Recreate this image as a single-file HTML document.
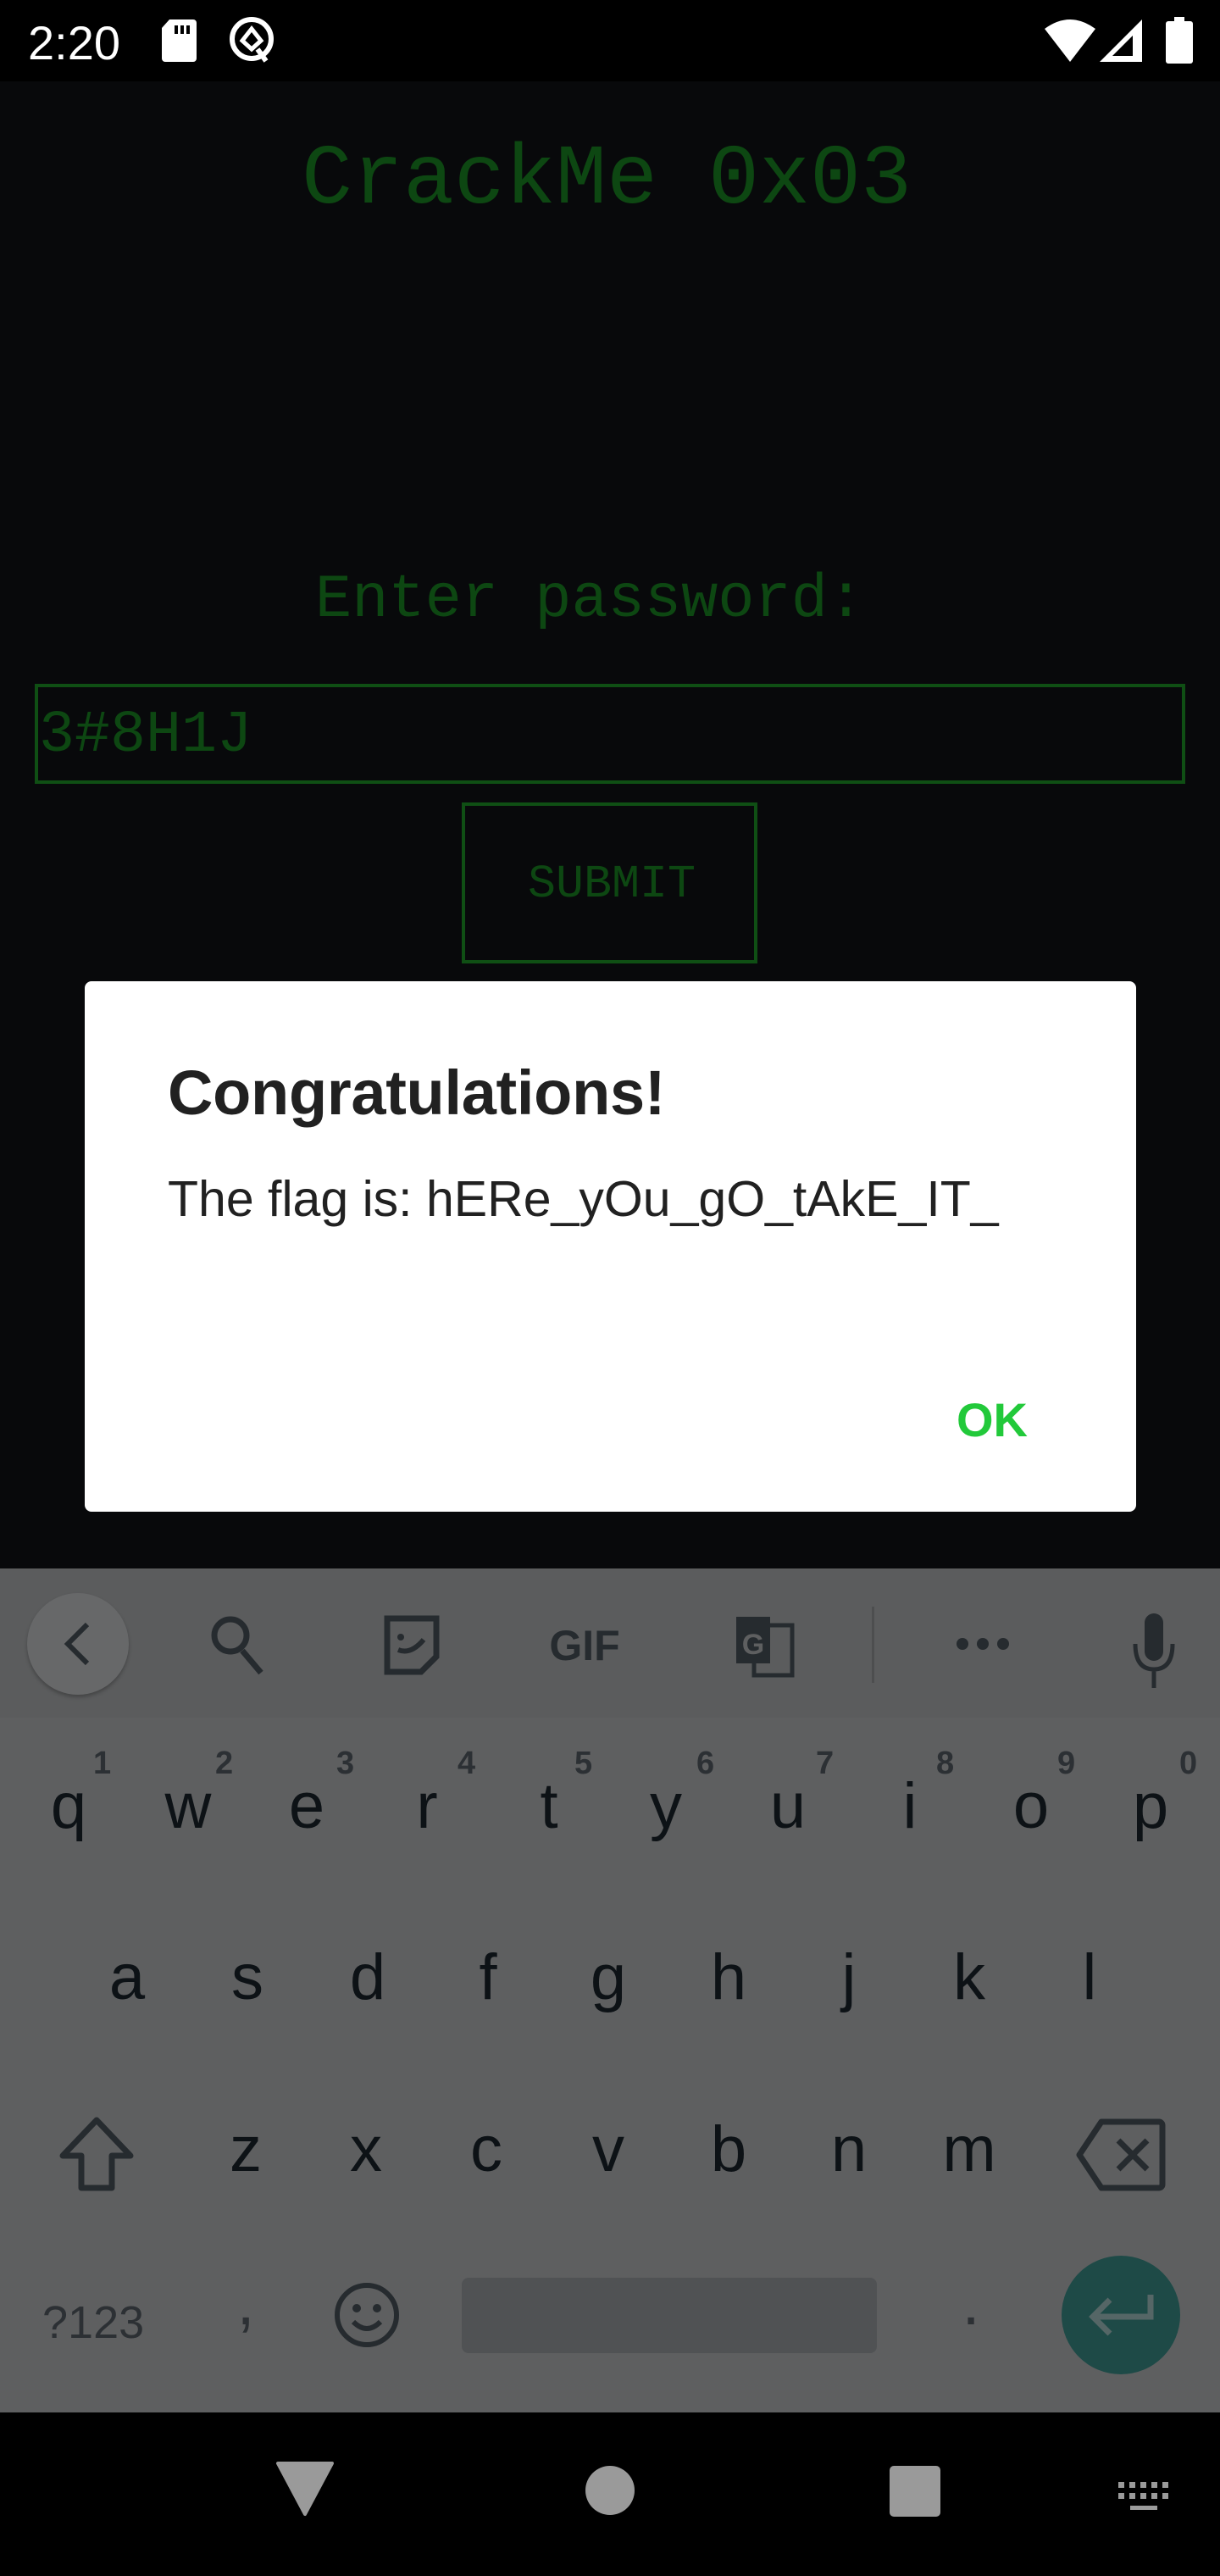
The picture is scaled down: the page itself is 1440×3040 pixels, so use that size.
<!DOCTYPE html>
<html><head><meta charset="utf-8"><style>
*{margin:0;padding:0;box-sizing:border-box}
body{width:1440px;height:3040px;background:#08090b;position:relative;overflow:hidden;font-family:"Liberation Sans",sans-serif}
.a{position:absolute;line-height:1;white-space:nowrap}
.m{font-family:"Liberation Mono",monospace;color:#0d4712}
.k{position:absolute;width:144px;text-align:center;line-height:1;font-size:76px;color:#0d1216}
.n{position:absolute;line-height:1;font-size:38px;color:#2c3034;font-weight:bold}
</style></head><body>
<!-- status bar -->
<div style="position:absolute;left:0;top:0;width:1440px;height:96px;background:#000"></div>
<div class="a" style="left:33px;top:23px;font-size:56px;color:#fff">2:20</div>
<svg style="position:absolute;left:186px;top:20px" width="50" height="56" viewBox="0 0 50 56"><path d="M14 3h28a4 4 0 0 1 4 4v42a4 4 0 0 1-4 4H9a4 4 0 0 1-4-4V13z" fill="#fff"/><rect x="20" y="10" width="4" height="10" fill="#000"/><rect x="27" y="10" width="4" height="10" fill="#000"/><rect x="34" y="10" width="4" height="10" fill="#000"/></svg>
<svg style="position:absolute;left:268px;top:18px" width="60" height="58" viewBox="0 0 60 58"><circle cx="29" cy="28" r="23" fill="none" stroke="#fff" stroke-width="6"/><path d="M29 16l11 14-11 10-11-10z" fill="none" stroke="#fff" stroke-width="5"/><path d="M36 40l10 14" stroke="#fff" stroke-width="6"/></svg>
<svg style="position:absolute;left:1232px;top:22px" width="62" height="52" viewBox="0 0 62 52"><path d="M1 12Q31-10 61 12L31 51z" fill="#fff"/></svg>
<svg style="position:absolute;left:1297px;top:22px" width="52" height="52" viewBox="0 0 52 52"><path d="M51 1V51H1z" fill="#fff"/><path d="M40 20V44H16z" fill="#000"/></svg>
<svg style="position:absolute;left:1376px;top:20px" width="32" height="55" viewBox="0 0 32 55"><rect x="10" y="0" width="12" height="6" fill="#fff"/><rect x="0" y="5" width="32" height="50" rx="3" fill="#fff"/></svg>

<!-- app -->
<div class="a m" style="left:0;width:1432px;text-align:center;top:164px;font-size:100px">CrackMe 0x03</div>
<div class="a m" style="left:372px;top:672px;font-size:72px">Enter password:</div>
<div style="position:absolute;left:41px;top:807px;width:1358px;height:118px;border:4px solid #0f4f14"></div>
<div class="a m" style="left:46px;top:834px;font-size:70px">3#8H1J</div>
<div style="position:absolute;left:545px;top:947px;width:349px;height:190px;border:4px solid #0f4f14"></div>
<div class="a m" style="left:623px;top:1016px;font-size:55px">SUBMIT</div>

<!-- dialog -->
<div style="position:absolute;left:100px;top:1158px;width:1241px;height:626px;background:#fff;border-radius:8px"></div>
<div class="a" style="left:198px;top:1253px;font-size:74px;font-weight:bold;color:#212121;letter-spacing:-0.3px">Congratulations!</div>
<div class="a" style="left:198px;top:1386px;font-size:59px;color:#212121">The flag is: hERe_yOu_gO_tAkE_IT_</div>
<div class="a" style="left:1129px;top:1648px;font-size:56px;font-weight:bold;color:#22c93a">OK</div>

<!-- keyboard -->
<div style="position:absolute;left:0;top:1851px;width:1440px;height:996px;background:#5e5f60"></div>
<div style="position:absolute;left:0;top:1851px;width:1440px;height:176px;background:#5b5c5d"></div>
<div style="position:absolute;left:32px;top:1880px;width:120px;height:120px;border-radius:50%;background:#676869;box-shadow:0 3px 4px rgba(0,0,0,.25)"></div>
<svg style="position:absolute;left:0;top:1860px" width="1440" height="170" viewBox="0 0 1440 170">
<path d="M103 57L80 80l23 23" fill="none" stroke="#262b2f" stroke-width="6"/>
<circle cx="272" cy="70" r="19" fill="none" stroke="#262b2f" stroke-width="7"/>
<path d="M286 88l22 26" stroke="#262b2f" stroke-width="7"/>
<path d="M457 50h58v45l-18 18h-40z" fill="none" stroke="#262b2f" stroke-width="7"/>
<circle cx="473" cy="72" r="4" fill="#262b2f"/><path d="M470 87q15 6 30-12" fill="none" stroke="#262b2f" stroke-width="6"/>
<text x="690" y="99" text-anchor="middle" font-family="Liberation Sans" font-weight="bold" font-size="50" fill="#262b2f">GIF</text>
<rect x="869" y="48" width="40" height="55" fill="#262b2f"/><rect x="890" y="58" width="45" height="59" fill="none" stroke="#262b2f" stroke-width="5"/>
<text x="889" y="92" text-anchor="middle" font-family="Liberation Sans" font-weight="bold" font-size="34" fill="#5e5f60">G</text>
<rect x="1029" y="36" width="3" height="90" fill="#4d4e4f"/>
<circle cx="1136" cy="80" r="7" fill="#262b2f"/><circle cx="1160" cy="80" r="7" fill="#262b2f"/><circle cx="1184" cy="80" r="7" fill="#262b2f"/>
<rect x="1351" y="44" width="22" height="56" rx="11" fill="#262b2f"/><path d="M1340 80q0 30 22 30t22-30M1362 110v22" fill="none" stroke="#262b2f" stroke-width="5"/>
</svg>

<div class="n" style="left:110px;top:2062px">1</div><div class="n" style="left:254px;top:2062px">2</div><div class="n" style="left:397px;top:2062px">3</div><div class="n" style="left:540px;top:2062px">4</div><div class="n" style="left:678px;top:2062px">5</div><div class="n" style="left:822px;top:2062px">6</div><div class="n" style="left:963px;top:2062px">7</div><div class="n" style="left:1105px;top:2062px">8</div><div class="n" style="left:1248px;top:2062px">9</div><div class="n" style="left:1392px;top:2062px">0</div>

<div class="k" style="left:9px;top:2094px">q</div><div class="k" style="left:150px;top:2094px">w</div><div class="k" style="left:290px;top:2094px">e</div><div class="k" style="left:432px;top:2094px">r</div><div class="k" style="left:576px;top:2094px">t</div><div class="k" style="left:714px;top:2094px">y</div><div class="k" style="left:858px;top:2094px">u</div><div class="k" style="left:1002px;top:2094px">i</div><div class="k" style="left:1145px;top:2094px">o</div><div class="k" style="left:1286px;top:2094px">p</div>

<div class="k" style="left:78px;top:2296px">a</div><div class="k" style="left:220px;top:2296px">s</div><div class="k" style="left:362px;top:2296px">d</div><div class="k" style="left:504px;top:2296px">f</div><div class="k" style="left:646px;top:2296px">g</div><div class="k" style="left:788px;top:2296px">h</div><div class="k" style="left:930px;top:2296px">j</div><div class="k" style="left:1072px;top:2296px">k</div><div class="k" style="left:1214px;top:2296px">l</div>

<div class="k" style="left:218px;top:2499px">z</div><div class="k" style="left:360px;top:2499px">x</div><div class="k" style="left:502px;top:2499px">c</div><div class="k" style="left:646px;top:2499px">v</div><div class="k" style="left:788px;top:2499px">b</div><div class="k" style="left:930px;top:2499px">n</div><div class="k" style="left:1072px;top:2499px">m</div>

<svg style="position:absolute;left:66px;top:2494px" width="96" height="96" viewBox="0 0 96 96"><path d="M48 8L8 50h22v38h36V50h22z" fill="none" stroke="#262b2f" stroke-width="7" stroke-linejoin="round"/></svg>
<svg style="position:absolute;left:1270px;top:2498px" width="106" height="90" viewBox="0 0 106 90"><path d="M30 6h68a4 4 0 0 1 4 4v70a4 4 0 0 1-4 4H30L4 45z" fill="none" stroke="#262b2f" stroke-width="7" stroke-linejoin="round"/><path d="M50 28l34 34M84 28L50 62" stroke="#262b2f" stroke-width="7"/></svg>

<div class="a" style="left:50px;top:2714px;font-size:54px;color:#2c3034">?123</div>
<div class="k" style="left:218px;top:2680px;color:#2c3034">,</div>
<svg style="position:absolute;left:393px;top:2692px" width="80" height="80" viewBox="0 0 80 80"><circle cx="40" cy="40" r="35" fill="none" stroke="#262b2f" stroke-width="6"/><circle cx="28" cy="32" r="5" fill="#262b2f"/><circle cx="52" cy="32" r="5" fill="#262b2f"/><path d="M24 48q16 16 32 0" fill="none" stroke="#262b2f" stroke-width="6"/></svg>
<div style="position:absolute;left:545px;top:2688px;width:490px;height:89px;border-radius:8px;background:#505254"></div>
<div class="k" style="left:1074px;top:2680px;color:#2c3034">.</div>
<div style="position:absolute;left:1253px;top:2662px;width:140px;height:140px;border-radius:50%;background:#1e4a47"></div>
<svg style="position:absolute;left:1280px;top:2700px" width="90" height="64" viewBox="0 0 90 64"><path d="M78 8v26H12M30 14L10 34l20 20" fill="none" stroke="#566" stroke-width="7"/></svg>

<!-- nav bar -->
<div style="position:absolute;left:0;top:2847px;width:1440px;height:193px;background:#000"></div>
<svg style="position:absolute;left:0;top:2847px" width="1440" height="193" viewBox="0 0 1440 193">
<path d="M328 60h64l-32 60z" fill="#9a9a9a" stroke="#9a9a9a" stroke-width="4" stroke-linejoin="round"/>
<ellipse cx="720" cy="92" rx="29" ry="29" fill="#9a9a9a"/>
<rect x="1050" y="63" width="60" height="60" rx="5" fill="#9a9a9a"/>
<g fill="#9a9a9a"><rect x="1320" y="82" width="7" height="7"/><rect x="1333" y="82" width="7" height="7"/><rect x="1346" y="82" width="7" height="7"/><rect x="1359" y="82" width="7" height="7"/><rect x="1372" y="82" width="7" height="7"/><rect x="1320" y="95" width="7" height="7"/><rect x="1333" y="95" width="7" height="7"/><rect x="1346" y="95" width="7" height="7"/><rect x="1359" y="95" width="7" height="7"/><rect x="1372" y="95" width="7" height="7"/><rect x="1334" y="110" width="32" height="5"/></g>
</svg>
</body></html>
